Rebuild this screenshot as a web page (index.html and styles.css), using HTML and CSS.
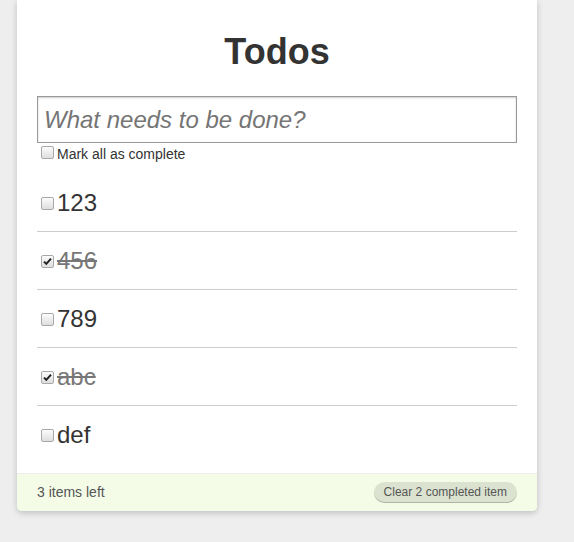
FILE: index.html
```html
<!DOCTYPE html>
<html>
<head>
<meta charset="utf-8">
<title>Todos</title>
<link rel="stylesheet" href="styles.css">
</head>
<body>
<div class="todoapp">
  <h1 class="title">Todos</h1>
  <div class="new-todo">What needs to be done?</div>
  <div class="mark-all"><span class="box"></span><span class="mark-label">Mark all as complete</span></div>
  <ul class="todo-list">
    <li class="todo"><span class="box"></span><span class="text">123</span></li>
    <li class="todo done"><span class="box checked"><svg viewBox="0 0 11 11" width="11" height="11"><path d="M2 5.6 L4.3 7.8 L9 2.6" fill="none" stroke="#222" stroke-width="2"/></svg></span><span class="text">456</span></li>
    <li class="todo"><span class="box"></span><span class="text">789</span></li>
    <li class="todo done"><span class="box checked"><svg viewBox="0 0 11 11" width="11" height="11"><path d="M2 5.6 L4.3 7.8 L9 2.6" fill="none" stroke="#222" stroke-width="2"/></svg></span><span class="text">abc</span></li>
    <li class="todo"><span class="box"></span><span class="text">def</span></li>
  </ul>
  <footer class="footer">
    <span class="count">3 items left</span>
    <span class="clear">Clear 2 completed item</span>
  </footer>
</div>
</body>
</html>
```
FILE: styles.css
```css
html, body {
  margin: 0;
  padding: 0;
}
body {
  background: #eeeeee;
  color: #333333;
  font: 14px "Liberation Sans", Arial, sans-serif;
  line-height: 1.4em;
}
.todoapp {
  width: 480px;
  margin: 0 0 30px 17px;
  padding: 27px 20px 20px;
  background: #fff;
  box-shadow: rgba(0, 0, 0, 0.2) 0 2px 6px 0;
  border-radius: 0 0 5px 5px;
}
.title {
  margin: 0 0 19px;
  font-size: 36px;
  line-height: 50px;
  font-weight: bold;
  text-align: center;
  color: #333;
}
.new-todo {
  height: 33px;
  padding: 6px;
  border: 1px solid #999999;
  box-shadow: rgba(0, 0, 0, 0.2) 0 1px 2px 0 inset;
  font-size: 24px;
  line-height: 33px;
  font-style: italic;
  color: #757575;
}
.mark-all {
  display: flex;
  align-items: center;
  margin-top: 1px;
  height: 20px;
}
.mark-label {
  line-height: 20px;
}
.box {
  display: flex;
  align-items: center;
  justify-content: center;
  box-sizing: border-box;
  width: 13px;
  height: 13px;
  margin: 0 3px 0 4px;
  border: 1px solid #a9a9a9;
  border-radius: 2px;
  background: linear-gradient(#fcfcfc, #dedede);
  flex: none;
}
.mark-all .box {
  margin-top: -3px;
}
.box svg {
  display: block;
}
.todo-list {
  list-style: none;
  margin: 10px 0;
  padding: 0;
}
.todo {
  display: flex;
  align-items: center;
  height: 57px;
  border-bottom: 1px solid #cccccc;
  font-size: 24px;
  line-height: 33px;
}
.todo:last-child {
  border-bottom: none;
}
.todo .box {
  margin-top: 1px;
}
.todo.done .text {
  color: #777777;
  text-decoration: line-through;
}
.footer {
  display: flex;
  justify-content: space-between;
  align-items: flex-start;
  margin: 0 -20px -20px;
  padding: 0 20px;
  height: 37px;
  line-height: 37px;
  color: #555555;
  background: #f4fce8;
  border-top: 1px solid #ededed;
  border-radius: 0 0 5px 5px;
}
.clear {
  margin-top: 8px;
  padding: 0 10px 1px;
  line-height: 20px;
  font-size: 12px;
  color: #555555;
  background: rgba(0, 0, 0, 0.1);
  border-radius: 12px;
  box-shadow: rgba(0, 0, 0, 0.2) 0 -1px 0 0 inset;
}
```
